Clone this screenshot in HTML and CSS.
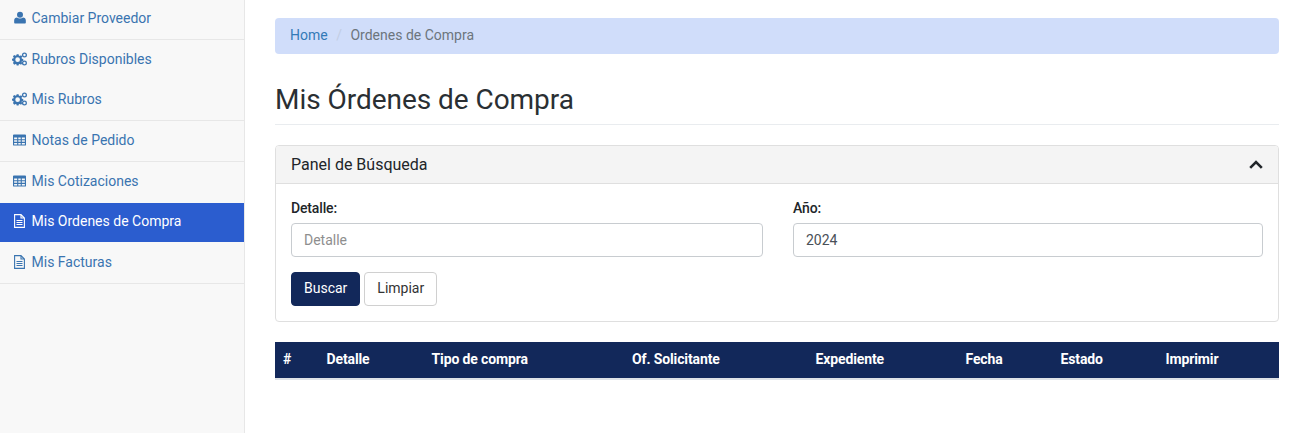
FILE: index.html
```html
<!DOCTYPE html>
<html lang="es">
<head>
<meta charset="utf-8">
<title>Mis Órdenes de Compra</title>
<link rel="stylesheet" href="styles.css">
</head>
<body>
<svg width="0" height="0" class="defs">
  <symbol id="i-user" viewBox="0 0 14 14"><circle cx="7" cy="3.8" r="3.5"/><path d="M1.500 14c-.8 0-1.300-.5-1.300-1.200V10.500c0-2 1.400-3.400 3.300-3.400.9.800 2.100 1.200 3.500 1.200s2.600-.4 3.500-1.200c1.900 0 3.300 1.400 3.300 3.400v2.300c0 .7-.5 1.200-1.300 1.200z"/></symbol>
  <symbol id="i-gears" viewBox="0 0 16 14"><path fill-rule="evenodd" d="M5 1.900h2l.3 1.400 1 .5 1.300-.8L11 4.400l-.8 1.300.4 1 1.400.3v2l-1.400.3-.4 1 .8 1.300-1.400 1.400-1.300-.8-1 .4-.3 1.400H5l-.3-1.400-1-.4-1.300.8L1 11.300l.8-1.300-.4-1L0 8.700v-2l1.400-.3.4-1L1 4.100l1.400-1.300 1.300.8 1-.5zM6 5.200a2.500 2.500 0 1 0 0 5 2.500 2.500 0 0 0 0-5z"/><path fill-rule="evenodd" d="M13.300 0a2.700 2.700 0 1 1 0 5.400 2.700 2.700 0 0 1 0-5.400zm0 1.400a1.300 1.300 0 1 0 0 2.600 1.300 1.300 0 0 0 0-2.600zM13.300 8.600a2.700 2.700 0 1 1 0 5.400 2.700 2.700 0 0 1 0-5.400zm0 1.400a1.300 1.300 0 1 0 0 2.600 1.300 1.300 0 0 0 0-2.600z"/></symbol>
  <symbol id="i-table" viewBox="0 0 14 12"><path fill-rule="evenodd" d="M1 0h12a1 1 0 0 1 1 1v10a1 1 0 0 1-1 1H1a1 1 0 0 1-1-1V1a1 1 0 0 1 1-1zm.2 3.200v1.900h3.300V3.200zm4.500 0v1.900h2.600V3.200zm3.800 0v1.900h3.300V3.200zM1.200 6.200v1.800h3.300V6.200zm4.500 0v1.800h2.600V6.200zm3.800 0v1.800h3.300V6.200zM1.200 9.100v1.700h3.300V9.100zm4.500 0v1.700h2.600V9.100zm3.800 0v1.700h3.300V9.100z"/></symbol>
  <symbol id="i-file" viewBox="0 0 12 14"><path fill="none" stroke="currentColor" stroke-width="1.100" d="M1.100.6h6.400l3.400 3.400v9.400H1.100zM7.500.6V4h3.400"/><path fill="none" stroke="currentColor" stroke-width="1" d="M3 6.500h6M3 8.500h6M3 10.500h6"/></symbol>
</svg>
<div class="layout">
  <nav class="sidebar">
    <a class="nav-item nav-lined" href="#"><svg class="icon-user"><use href="#i-user"/></svg>Cambiar Proveedor</a>
    <a class="nav-item" href="#"><svg class="icon-gears"><use href="#i-gears"/></svg>Rubros Disponibles</a>
    <a class="nav-item nav-lined" href="#"><svg class="icon-gears"><use href="#i-gears"/></svg>Mis Rubros</a>
    <a class="nav-item nav-lined" href="#"><svg class="icon-table"><use href="#i-table"/></svg>Notas de Pedido</a>
    <a class="nav-item" href="#"><svg class="icon-table"><use href="#i-table"/></svg>Mis Cotizaciones</a>
    <a class="nav-item nav-active" href="#"><svg class="icon-file"><use href="#i-file"/></svg>Mis Ordenes de Compra</a>
    <a class="nav-item nav-lined" href="#"><svg class="icon-file"><use href="#i-file"/></svg>Mis Facturas</a>
  </nav>
  <main class="content">
    <ol class="breadcrumb">
      <li><a href="#">Home</a></li>
      <li class="crumb-sep">/</li>
      <li class="crumb-current">Ordenes de Compra</li>
    </ol>
    <h1 class="page-title">Mis Órdenes de Compra</h1>
    <section class="card">
      <header class="card-header">
        <span>Panel de Búsqueda</span>
        <svg class="chevron" viewBox="0 0 14 9"><path d="M1.200 7.800 7 2l5.800 5.800" fill="none" stroke="currentColor" stroke-width="2.600"/></svg>
      </header>
      <div class="card-body">
        <div class="form-grid">
          <div class="field">
            <label class="field-label">Detalle:</label>
            <input class="field-input" type="text" placeholder="Detalle">
          </div>
          <div class="field">
            <label class="field-label">Año:</label>
            <input class="field-input" type="text" value="2024">
          </div>
        </div>
        <div class="actions">
          <button class="btn btn-primary" type="button">Buscar</button>
          <button class="btn btn-light" type="button">Limpiar</button>
        </div>
      </div>
    </section>
    <table class="results">
      <thead>
        <tr>
          <th class="col-num">#</th>
          <th class="col-det">Detalle</th>
          <th class="col-tipo">Tipo de compra</th>
          <th class="col-of">Of. Solicitante</th>
          <th class="col-exp">Expediente</th>
          <th class="col-fec">Fecha</th>
          <th class="col-est">Estado</th>
          <th class="col-imp">Imprimir</th>
        </tr>
      </thead>
    </table>
  </main>
</div>
</body>
</html>
```
FILE: styles.css
```css
* { box-sizing: border-box; }
html, body { margin: 0; height: 100%; }
body {
  font-family: Roboto, "Liberation Sans", sans-serif;
  font-size: 14px;
  color: #212529;
  background: #fff;
  overflow: hidden;
}
.defs { position: absolute; }
.layout { display: flex; height: 433px; }
.sidebar {
  width: 245px;
  flex: none;
  margin-top: -0.67px;
  background: #f8f8f8;
  border-right: 1px solid #e7e7e7;
}
.nav-item {
  display: flex;
  align-items: center;
  height: 40.67px;
  padding: 0 0 2.5px 12px;
  color: #3a74b0;
  text-decoration: none;
  border-bottom: 1px solid transparent;
}
.nav-item svg { flex: none; fill: currentColor; }
.nav-lined { border-bottom-color: #e7e7e7; }
.nav-active { background: #2b5dcf; background-clip: padding-box; color: #fff; }
.icon-user { width: 12px; height: 13px; margin: 0 5.5px 0 2px; }
.icon-gears { width: 15px; height: 14px; margin-right: 4.5px; }
.icon-table { width: 13px; height: 12px; margin: 0 5.5px 0 1px; }
.icon-file { width: 13px; height: 14px; margin: 0 5.5px 0 1px; }
.content { flex: 1; min-width: 0; padding: 18px 27px 0 30px; }
.breadcrumb {
  display: flex;
  align-items: center;
  gap: 8.5px;
  height: 36px;
  margin: 0;
  padding: 0 15px 2px;
  list-style: none;
  background: #d0ddfa;
  border-radius: 4px;
}
.breadcrumb a { color: #337ab7; text-decoration: none; }
.crumb-sep { color: #c2cde4; }
.crumb-current { color: #6c757d; }
.page-title {
  margin: 29px 0 20px;
  padding-bottom: 7px;
  font-size: 28px;
  font-weight: 400;
  line-height: 34px;
  letter-spacing: -0.04px;
  color: #2a2f33;
  border-bottom: 1px solid #e9ecef;
}
.card {
  border: 1px solid #dfdfdf;
  border-radius: 4px;
  margin-bottom: 20px;
}
.card-header {
  display: flex;
  align-items: center;
  justify-content: space-between;
  height: 38px;
  padding: 0 15px;
  font-size: 16px;
  background: #f4f4f4;
  border-bottom: 1px solid #dfdfdf;
  border-radius: 3px 3px 0 0;
}
.chevron { width: 14px; height: 9px; color: #212529; }
.card-body { padding: 14px 15px 15px; height: 137px; }
.form-grid { display: grid; grid-template-columns: 472px 470px; column-gap: 30px; }
.field-label { display: block; height: 25px; line-height: 20px; font-weight: 500; letter-spacing: -0.15px; }
.field-input {
  display: block;
  width: 100%;
  height: 34px;
  padding: 0 12px;
  font: inherit;
  color: #495057;
  border: 1px solid #c8ccd0;
  border-radius: 4px;
}
.field-input::placeholder { color: #8e8e8e; }
.actions { display: flex; gap: 4px; margin-top: 15px; }
.btn { height: 34px; padding: 0 12px 2px; font: inherit; border-radius: 4px; }
.btn-primary { background: #12285a; border: 1px solid #12285a; color: #fff; }
.btn-light { background: #fff; border: 1px solid #d0d0d0; color: #333; }
.results { width: 100%; border-collapse: collapse; table-layout: fixed; }
.results th {
  height: 37px;
  padding: 0 8px 2px;
  text-align: left;
  font-weight: 700;
  letter-spacing: -0.12px;
  color: #fff;
  background: #12285a;
  border-bottom: 2px solid #dee2e6;
}
.col-num { width: 43.5px; }
.col-det { width: 105px; }
.col-tipo { width: 200.5px; }
.col-of { width: 183.5px; }
.col-exp { width: 150px; }
.col-fec { width: 95px; }
.col-est { width: 105px; }
```
